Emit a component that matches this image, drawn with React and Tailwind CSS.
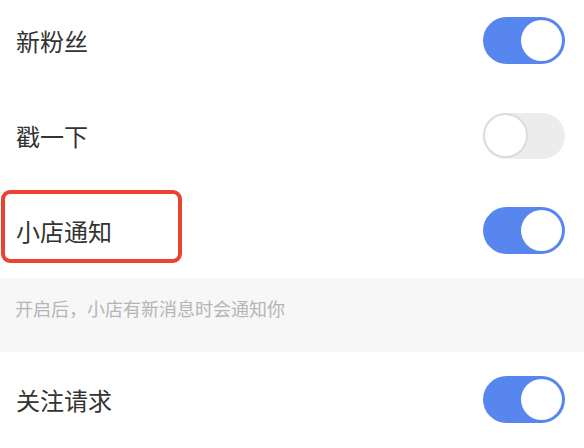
import React from "react";

function Toggle({ on }) {
  if (on) {
    return (
      <div className="w-[82px] h-[47px] rounded-full bg-[#5686ee] flex items-center justify-end pr-[3px]">
        <div className="w-[41px] h-[41px] rounded-full bg-white" />
      </div>
    );
  }
  return (
    <div className="w-[82px] h-[46px] rounded-full bg-[#ececec] flex items-center justify-start">
      <div className="w-[45px] h-[45px] rounded-full bg-white border-2 border-[#dcdcdc]" />
    </div>
  );
}

function Row({ label, on, children }) {
  return (
    <div className="relative h-[95px] bg-white flex items-center justify-between pl-[16px] pr-[19px]">
      <span className="text-[24px] leading-none text-[#333333]">{label}</span>
      <Toggle on={on} />
      {children}
    </div>
  );
}

export default function App() {
  return (
    <div
      className="w-[584px] h-[448px] overflow-hidden bg-white"
      style={{ fontFamily: '"Noto Sans CJK SC", "Noto Sans", sans-serif' }}
    >
      <div className="-mt-[7px]">
        <Row label="新粉丝" on />
        <Row label="戳一下" on={false} />
        <Row label="小店通知" on>
          <div className="absolute left-[1px] top-[7px] w-[181px] h-[73px] border-[4px] border-[#ea4430] rounded-[9px]" />
        </Row>
        <div className="h-[74px] bg-[#f7f7f7] flex items-start pt-[21px] pl-[15px]">
          <span className="text-[18px] leading-none text-[#b5b5b5]">开启后，小店有新消息时会通知你</span>
        </div>
        <Row label="关注请求" on />
      </div>
    </div>
  );
}
